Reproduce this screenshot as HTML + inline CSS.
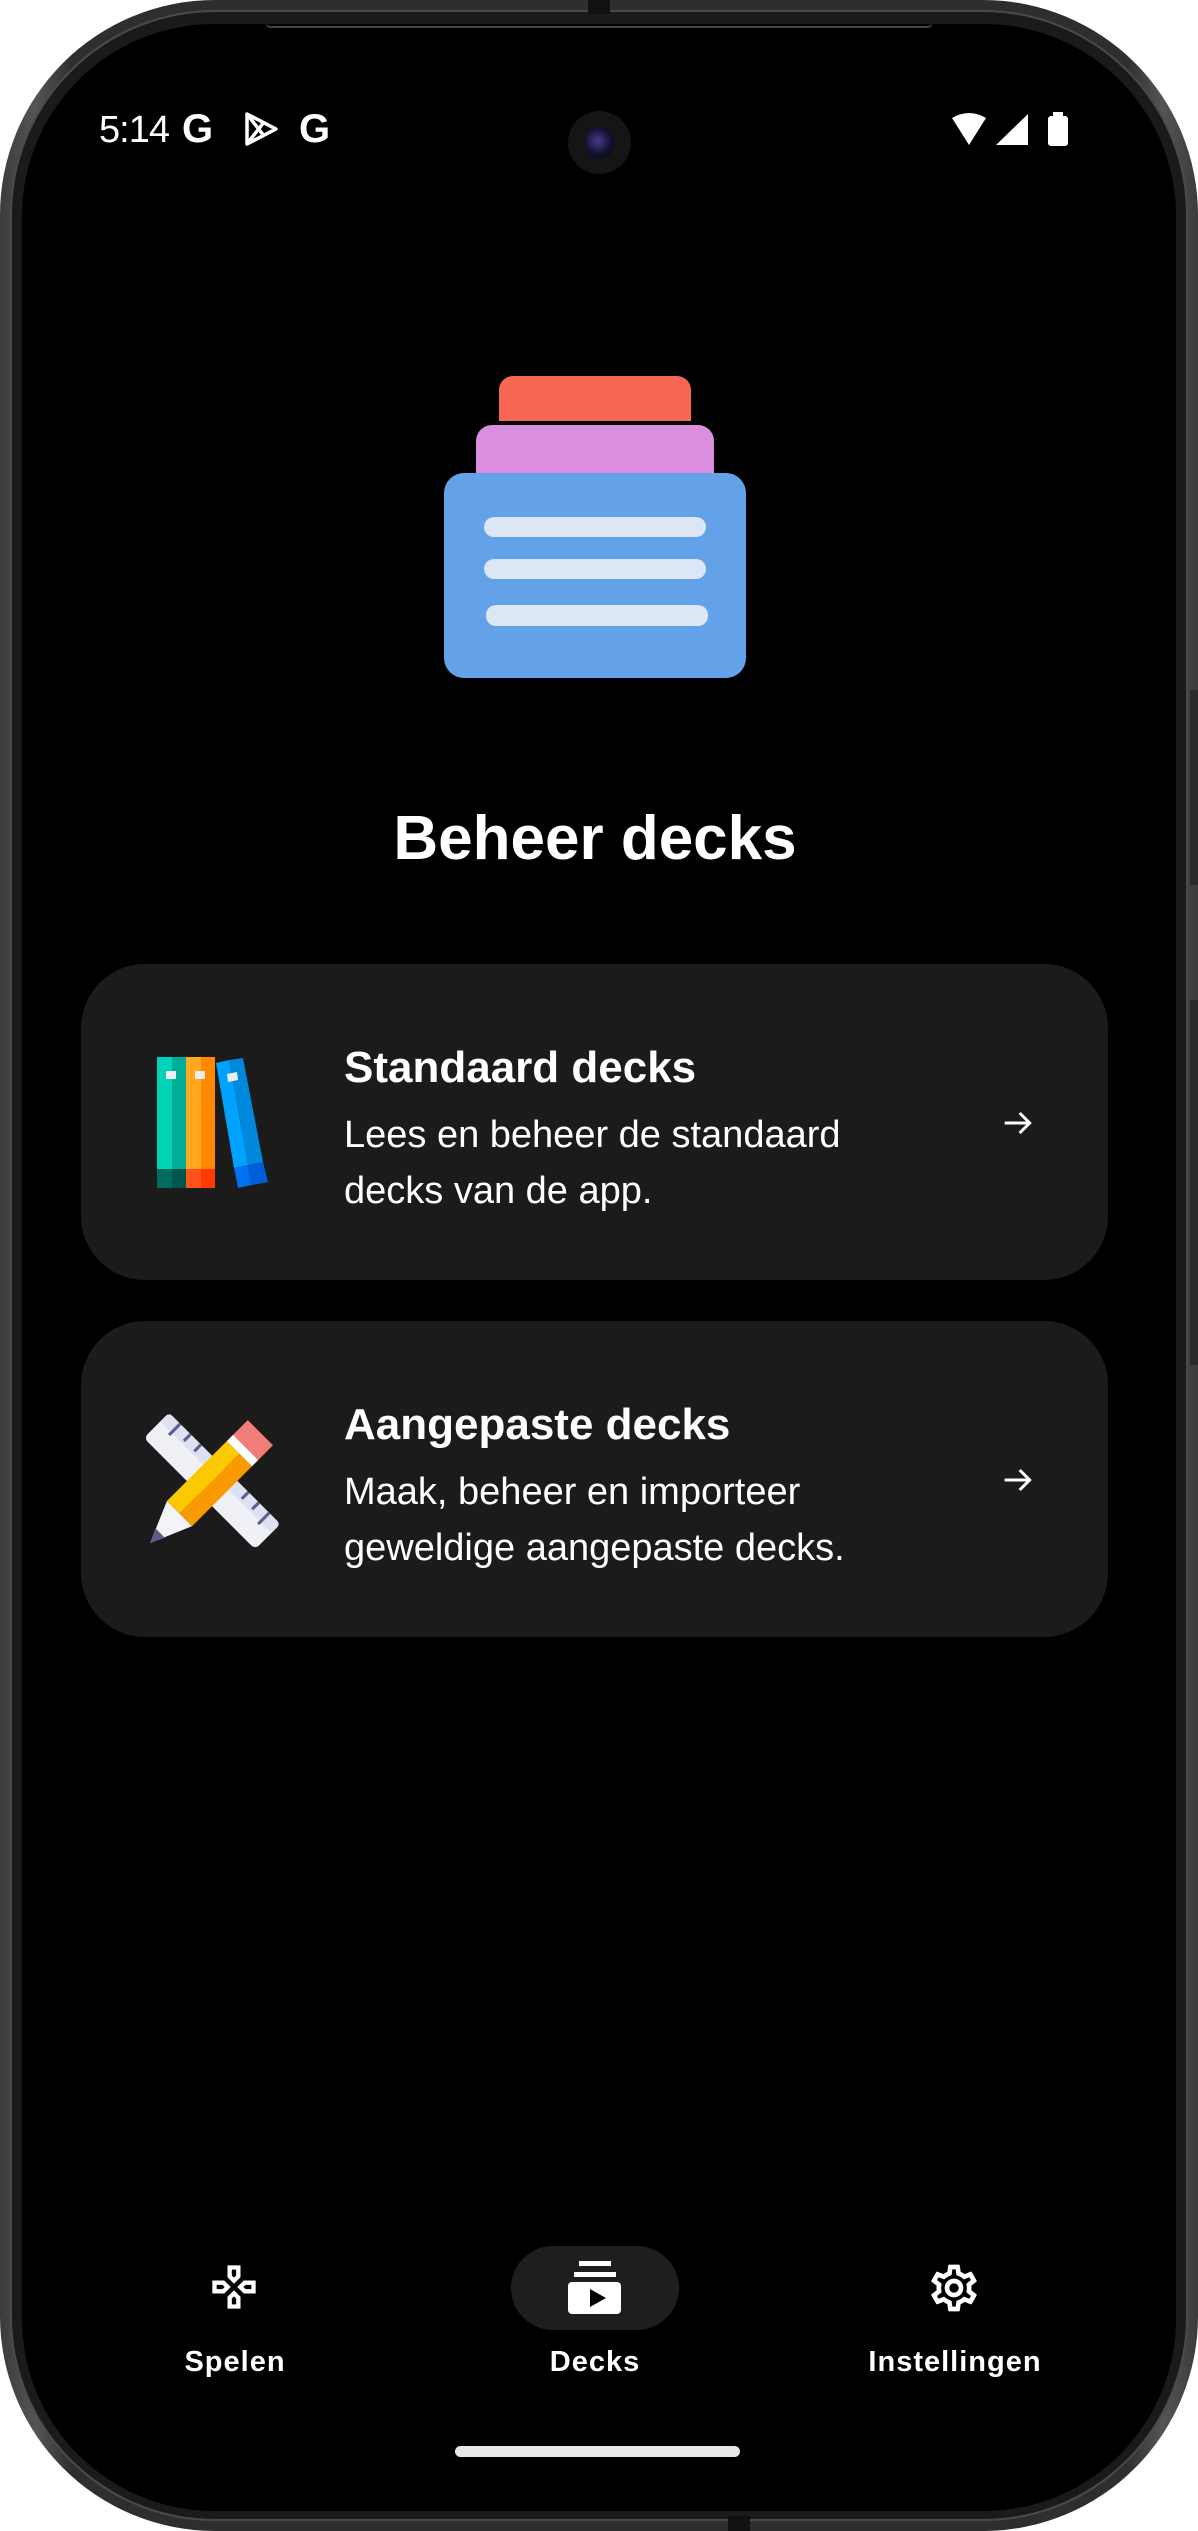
<!DOCTYPE html>
<html><head><meta charset="utf-8"><style>
*{margin:0;padding:0;box-sizing:border-box}
html,body{width:1198px;height:2531px;background:#fff;overflow:hidden;font-family:"Liberation Sans",sans-serif}
.body{position:absolute;left:0;top:0;width:1198px;height:2531px;border-radius:215px;background:linear-gradient(90deg,#3b3b3b,#555 3%,#2e2e2e 6%,#2e2e2e 94%,#555 97%,#3b3b3b);}
.rim{position:absolute;left:10px;top:10px;right:10px;bottom:10px;border-radius:205px;background:#1a1a1a;border:2px solid #4a4a4a}
.screen{position:absolute;left:22px;top:24px;width:1154px;height:2487px;border-radius:192px;background:#000;overflow:hidden}
.abs{position:absolute}
.w{color:#fff}
.card{position:absolute;left:81px;width:1027px;height:316px;background:#1b1b1b;border-radius:64px}
.ct{position:absolute;left:344px;font-size:44px;font-weight:bold;color:#fff;white-space:nowrap}
.cd{position:absolute;left:344px;font-size:38px;color:#fff;line-height:56px;white-space:nowrap}
.lbl{position:absolute;top:2346px;font-size:29px;font-weight:bold;color:#fff;letter-spacing:1px;text-align:center;width:300px}
</style></head><body>
<div class="body"></div>
<div class="rim"></div>
<div class="abs" style="left:588px;top:0;width:22px;height:14px;background:#111"></div>
<div class="abs" style="left:1190px;top:690px;width:8px;height:195px;background:#2a2a2a"></div>
<div class="abs" style="left:1190px;top:1000px;width:8px;height:365px;background:#2a2a2a"></div>
<div class="screen"></div>
<div class="abs" style="left:265px;top:22px;width:668px;height:6px;border-bottom:2px solid #444;border-radius:0 0 6px 6px"></div>

<!-- status bar -->
<div class="abs w" style="left:99px;top:109px;font-size:38px;letter-spacing:-1px">5:14</div>
<div class="abs w" style="left:182px;top:107px;font-size:40px;font-weight:bold">G</div>
<svg class="abs" style="left:244px;top:112px" width="36" height="34" viewBox="0 0 36 34"><path d="M3 2 L32 17 L3 32 Z M3 2 L20 24 M3 32 L20 10" fill="none" stroke="#fff" stroke-width="3.5" stroke-linejoin="round"/></svg>
<div class="abs w" style="left:299px;top:107px;font-size:40px;font-weight:bold">G</div>
<div class="abs" style="left:568px;top:111px;width:63px;height:63px;border-radius:50%;background:#151515"></div>
<div class="abs" style="left:584px;top:127px;width:31px;height:31px;border-radius:50%;background:radial-gradient(circle at 45% 45%,#4a3a8a,#101030 55%,#050505)"></div>
<svg class="abs" style="left:950px;top:112px" width="120" height="34" viewBox="0 0 120 34"><path d="M2 6 Q19 -4 36 6 L19 33 Z" fill="#fff"/><path d="M78 2 L78 33 L46 33 Z" fill="#fff"/><rect x="98" y="4" width="20" height="30" rx="3" fill="#fff"/><rect x="103" y="0" width="10" height="5" fill="#fff"/></svg>

<!-- deck icon -->
<div class="abs" style="left:499px;top:376px;width:192px;height:45px;background:#f76653;border-radius:14px 14px 0 0"></div>
<div class="abs" style="left:476px;top:425px;width:238px;height:48px;background:#d98ee0;border-radius:16px 16px 0 0"></div>
<div class="abs" style="left:444px;top:473px;width:302px;height:205px;background:#63a1e9;border-radius:20px"></div>
<div class="abs" style="left:484px;top:517px;width:222px;height:20px;background:#dbe6f6;border-radius:10px"></div>
<div class="abs" style="left:484px;top:559px;width:222px;height:20px;background:#dbe6f6;border-radius:10px"></div>
<div class="abs" style="left:486px;top:605px;width:222px;height:21px;background:#dbe6f6;border-radius:10px"></div>

<div class="abs w" style="left:-4px;width:1198px;top:803px;text-align:center;font-size:62px;font-weight:bold">Beheer decks</div>

<div class="card" style="top:964px"></div>
<svg class="abs" style="left:130px;top:1040px" width="160" height="160" viewBox="0 0 160 160">
<rect x="27" y="17" width="15" height="112" fill="#00d4b8"/><rect x="42" y="17" width="14" height="112" fill="#00ad98"/>
<rect x="27" y="129" width="15" height="19" fill="#006b5e"/><rect x="42" y="129" width="14" height="19" fill="#00564b"/>
<rect x="56" y="17" width="15" height="112" fill="#ffa820"/><rect x="71" y="17" width="14" height="112" fill="#ff8800"/>
<rect x="56" y="129" width="15" height="19" fill="#ff5420"/><rect x="71" y="129" width="14" height="19" fill="#ff3a00"/>
<rect x="36" y="31" width="10" height="8" fill="#eee"/><rect x="65" y="31" width="10" height="8" fill="#eee"/>
<polygon points="86,23 99,20 118,125 104,128" fill="#00a2ff"/>
<polygon points="99,20 113,18 133,122 118,125" fill="#0088dd"/>
<polygon points="104,128 118,125 122,145 108,148" fill="#0070f0"/>
<polygon points="118,125 133,122 138,142 122,145" fill="#005ed8"/>
<polygon points="97,34 107,32 108,40 98,42" fill="#eee"/>
</svg>
<div class="ct" style="top:1043px">Standaard decks</div>
<div class="cd" style="top:1107px">Lees en beheer de standaard<br>decks van de app.</div>
<svg class="abs" style="left:998px;top:1103px" width="40" height="40" viewBox="0 0 24 24"><path d="M4 12h15M13 6l6 6-6 6" fill="none" stroke="#fff" stroke-width="1.8"/></svg>

<div class="card" style="top:1321px"></div>
<svg class="abs" style="left:126px;top:1397px" width="168" height="168" viewBox="0 0 160 160">
<g transform="rotate(45 82 80)"><rect x="7" y="63" width="150" height="34" rx="5" fill="#f0f1f7"/><rect x="7" y="63" width="150" height="12" rx="4" fill="#dfe1f3"/>
<g stroke="#5b6190" stroke-width="3"><line x1="22" y1="63" x2="22" y2="78"/><line x1="36" y1="63" x2="36" y2="72"/><line x1="50" y1="63" x2="50" y2="72"/><line x1="114" y1="63" x2="114" y2="72"/><line x1="128" y1="63" x2="128" y2="72"/><line x1="142" y1="63" x2="142" y2="78"/></g></g>
<polygon points="23,139 63,123 39,99" fill="#f4f4f8"/><polygon points="23,139 37,134 28,125" fill="#5a5f8a"/>
<polygon points="39,99 51,111 108,54 96,42" fill="#fcc800"/><polygon points="51,111 63,123 120,66 108,54" fill="#f99a00"/>
<polygon points="96,42 120,66 126,60 102,36" fill="#fff"/>
<polygon points="102,36 126,60 140,46 116,22" fill="#f07d78"/>
</svg>
<div class="ct" style="top:1400px">Aangepaste decks</div>
<div class="cd" style="top:1464px">Maak, beheer en importeer<br>geweldige aangepaste decks.</div>
<svg class="abs" style="left:998px;top:1460px" width="40" height="40" viewBox="0 0 24 24"><path d="M4 12h15M13 6l6 6-6 6" fill="none" stroke="#fff" stroke-width="1.8"/></svg>

<!-- nav -->
<svg class="abs" style="left:208px;top:2261px" width="52" height="52" viewBox="0 0 24 24"><path fill="#fff" d="M13 4v2.67l-1 1-1-1V4h2m7 7v2h-2.670l-1-1 1-1H20M6.67 11l1 1-1 1H4v-2h2.67M12 16.33l1 1V20h-2v-2.67l1-1M15 2H9v5.5l3 3 3-3V2zm7 7h-5.5l-3 3 3 3H22V9zM7.5 9H2v6h5.5l3-3-3-3zm4.5 4.5l-3 3V22h6v-5.5l-3-3z"/></svg>
<div class="abs" style="left:511px;top:2246px;width:168px;height:84px;border-radius:42px;background:#1e1e1e"></div>
<div class="abs" style="left:579px;top:2261px;width:32px;height:5px;background:#fff"></div>
<div class="abs" style="left:574px;top:2272px;width:42px;height:5px;background:#fff"></div>
<svg class="abs" style="left:568px;top:2282px" width="53" height="32" viewBox="0 0 53 32"><rect width="53" height="32" rx="4" fill="#fff"/><path d="M22 7 L38 16 L22 25Z" fill="#000"/></svg>
<svg class="abs" style="left:926px;top:2260px" width="56" height="56" viewBox="0 0 24 24"><path fill="#fff" d="M19.43 12.98c.04-.32.07-.64.07-.98s-.03-.66-.07-.98l2.11-1.65a.5.5 0 0 0 .12-.64l-2-3.46a.5.5 0 0 0-.61-.22l-2.490 1a7.3 7.3 0 0 0-1.690-.98l-.38-2.650A.49.49 0 0 0 14 2h-4c-.25 0-.46.18-.49.42l-.38 2.65c-.61.25-1.17.59-1.69.98l-2.49-1a.5.5 0 0 0-.61.22l-2 3.46a.49.49 0 0 0 .12.64l2.11 1.65c-.04.32-.07.65-.07.98s.03.66.07.98l-2.11 1.65a.5.5 0 0 0-.12.64l2 3.46c.12.22.39.3.61.22l2.49-1c.52.4 1.08.73 1.69.98l.38 2.65c.03.24.24.42.49.42h4c.25 0 .46-.18.49-.42l.38-2.65c.61-.25 1.17-.59 1.69-.98l2.49 1c.23.09.49 0 .61-.22l2-3.46a.5.5 0 0 0-.12-.64l-2.11-1.65zm-1.98-1.71c.04.31.05.52.05.73 0 .21-.02.43-.05.73l-.14 1.13.89.7 1.08.84-.7 1.21-1.27-.51-1.04-.42-.9.68c-.43.32-.84.56-1.25.73l-1.06.43-.16 1.13-.2 1.35h-1.4l-.19-1.35-.16-1.13-1.06-.43c-.43-.18-.83-.41-1.23-.71l-.91-.7-1.06.43-1.27.51-.7-1.21 1.08-.84.89-.7-.14-1.13c-.03-.31-.05-.54-.05-.74s.02-.43.05-.73l.14-1.13-.89-.7-1.08-.84.7-1.21 1.27.51 1.04.42.9-.68c.43-.32.84-.56 1.25-.73l1.06-.43.16-1.13.2-1.35h1.39l.19 1.35.16 1.13 1.06.43c.43.18.83.41 1.23.71l.91.7 1.06-.43 1.27-.51.7 1.21-1.07.85-.89.7.14 1.13zM12 8c-2.21 0-4 1.79-4 4s1.79 4 4 4 4-1.79 4-4-1.79-4-4-4zm0 6c-1.1 0-2-.9-2-2s.9-2 2-2 2 .9 2 2-.9 2-2 2z"/></svg>
<div class="lbl" style="left:85px">Spelen</div>
<div class="lbl" style="left:445px">Decks</div>
<div class="lbl" style="left:805px">Instellingen</div>
<div class="abs" style="left:455px;top:2446px;width:285px;height:11px;border-radius:6px;background:#e8e8e8"></div>
<div class="abs" style="left:728px;top:2516px;width:22px;height:15px;background:#111"></div>
</body></html>
